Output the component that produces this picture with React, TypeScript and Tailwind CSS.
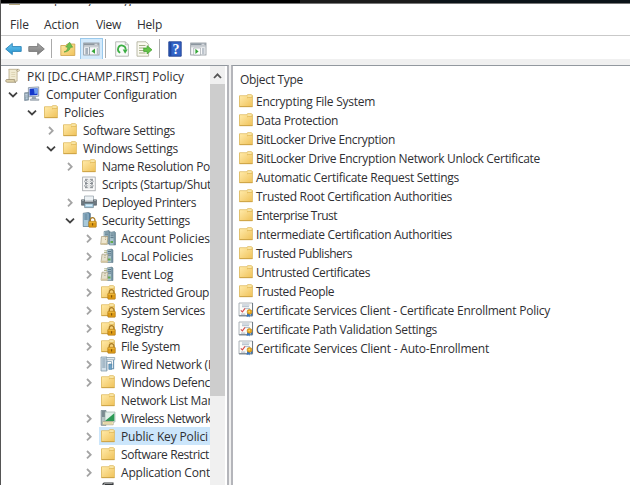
import React, { useLayoutEffect, useRef, useState } from "react";

const FONT = "font-['Open_Sans','Noto_Sans',sans-serif] text-[12px]";

/** Single-line label whose letter spacing adapts to fill the given width. */
function Label({ text, w, className = "" }: { text: string; w: number; className?: string }) {
  const ref = useRef<HTMLSpanElement>(null);
  const [spacing, setSpacing] = useState(0);
  useLayoutEffect(() => {
    if (ref.current) {
      const natural = ref.current.getBoundingClientRect().width;
      setSpacing((w - natural) / text.length);
    }
  }, [text, w]);
  return (
    <span
      ref={ref}
      style={{ letterSpacing: `${spacing}px` }}
      className={`inline-block shrink-0 translate-y-px whitespace-pre text-[#2f2f33] ${className}`}
    >
      {text}
    </span>
  );
}

type IconName =
  | "scroll" | "computer" | "folder" | "script" | "printer" | "security"
  | "serverDoc" | "server" | "lockFolder" | "wired" | "wireless" | "cert" | "stack";

function FolderShape() {
  return (
    <>
      <path d="M1.5 2.8h7.2l.8-1.1h4l.9.9v11H1.5z" fill="#f6d67b" stroke="#dcb65a" strokeWidth=".8" />
      <path d="M2 3.3h7l1 1.2h4v8.7H2z" fill="url(#fold)" />
      <path d="M9.5 2.6h4v1.3h-3.4z" fill="#fff4c4" />
      <path d="M9 5.1l1.2-.9h4" fill="none" stroke="#d5ac4b" strokeWidth=".7" />
      <path d="M1.5 13.6h13" stroke="#c99f40" strokeWidth=".9" />
    </>
  );
}

function Lock() {
  return (
    <>
      <path d="M9.3 9.8V8a2.3 2.3 0 0 1 4.6 0v1.8" fill="none" stroke="#a87b26" strokeWidth="1.3" />
      <rect x="7.8" y="9.3" width="7.5" height="5.9" rx=".6" fill="#dd9b16" stroke="#a87112" strokeWidth=".6" />
      <path d="M8.3 10.2h6.2" stroke="#f2c44e" strokeWidth=".9" />
      <path d="M11.6 11.2v2.2" stroke="#7c520c" strokeWidth="1.1" />
    </>
  );
}

function Tower({ x, y = 1 }: { x: number; y?: number }) {
  return (
    <g transform={`translate(${x} ${y})`}>
      <path d="M1 1L6 0l1 1v12.5H1z" fill="#7895a4" stroke="#516e7c" strokeWidth=".5" />
      <path d="M1.2 1.2h3.9v12H1.2z" fill="#a9c3cd" />
      <path d="M2 2.5h3M2 4.3h3M2 6.1h3" stroke="#39566a" strokeWidth=".7" />
      <path d="M2 9.5h2.5v2H2z" fill="#62a84c" />
    </g>
  );
}

function Icon({ name }: { name: IconName }) {
  return (
    <svg className="h-4 w-4 shrink-0" viewBox="0 0 16 16">
      {name === "folder" && <FolderShape />}
      {name === "lockFolder" && <><FolderShape /><Lock /></>}
      {name === "scroll" && (
        <>
          <path d="M4 1.3h9.5c1.4 0 1.4 2 0 2h-1.4v9.9H4V3C4 2 3.900 1.600 3.500 1.900z" fill="#f0ead2" stroke="#ad9e79" strokeWidth=".7" />
          <path d="M1.400 11.500h8.200c-.8 1.500.4 2.600 1.400 2.800H2.300c-1.800 0-2-2-.9-2.800z" fill="#ded1a9" stroke="#948768" strokeWidth=".7" />
          <path d="M12.900 1.500c-1.200 0-1.500 1.400-.6 1.900" fill="none" stroke="#8e8366" strokeWidth=".8" />
          <path d="M6.300 4.500h4M6.300 6.500h4M6.300 8.500h4" stroke="#d5cba9" strokeWidth=".7" />
        </>
      )}
      {name === "computer" && (
        <>
          <path d="M4.4 1.6l10.3-.7v9.3L4.4 10.8z" fill="#dfe6ee" stroke="#728394" strokeWidth=".7" />
          <path d="M5.6 2.8l7.9-.6v6.9l-7.9.5z" fill="#1537cb" />
          <path d="M9.8 2.5l3.7-.3v5.2L10.6 8z" fill="#6b9cf0" />
          <path d="M8.2 10.5h3.4l.8 2.4H7.6z" fill="#9aa7b3" />
          <path d="M6.3 13h8.5v1.4H6.3z" fill="#c5cdd4" stroke="#7d8994" strokeWidth=".5" />
          <path d="M.6 6.8l4-.4v7.7l-4 .5z" fill="#8fa3b3" stroke="#6a7c8b" strokeWidth=".6" />
          <path d="M1.3 8.4h2.2M1.3 10h2.2" stroke="#d8e2e9" strokeWidth=".8" />
          <circle cx="2.6" cy="12.2" r="1" fill="#b8cddb" />
        </>
      )}
      {name === "script" && (
        <>
          <rect x="1.7" y="1" width="12.5" height="13.8" fill="#fbfbfb" stroke="#92969a" strokeWidth=".7" />
          <path d="M4 3.3h2.8M9 3.3h3M4 7.5h2.8M9 7.5h3M4 11.7h2.8M9 11.7h3" stroke="#777d83" strokeWidth=".9" />
          <circle cx="4.9" cy="5.4" r="1.2" fill="none" stroke="#777d83" strokeWidth=".8" />
          <circle cx="10.9" cy="5.4" r="1.2" fill="none" stroke="#777d83" strokeWidth=".8" />
          <circle cx="4.9" cy="9.8" r="1.2" fill="none" stroke="#777d83" strokeWidth=".8" />
          <circle cx="10.9" cy="9.8" r="1.2" fill="none" stroke="#777d83" strokeWidth=".8" />
          <path d="M8 2.7v10" stroke="#b4b8bb" strokeWidth=".6" />
        </>
      )}
      {name === "printer" && (
        <>
          <path d="M3.5 2h9v5h-9z" fill="#edf2f5" stroke="#929fa7" strokeWidth=".7" />
          <path d="M.5 5.8h3V8h9V5.8h3v5.4H.5z" fill="#6d7880" stroke="#4c565d" strokeWidth=".6" />
          <path d="M1 6.5h2M13 6.5h2" stroke="#9ba5ab" />
          <path d="M3.6 9.6h8.8v4H3.6z" fill="#a9cfe4" stroke="#6a7f8b" strokeWidth=".7" />
          <path d="M5 11.3h6" stroke="#dff1fb" strokeWidth="1.2" />
        </>
      )}
      {name === "security" && (
        <>
          <path d="M2.2 1.2L7.6.5l1.8 1v13H2.2z" fill="#5c83a0" stroke="#4b6a7e" strokeWidth=".6" />
          <path d="M2.5 1.5h5v12.7h-5z" fill="#a8c9da" />
          <path d="M3.3 3h3.4M3.3 5h3.4M3.3 7h3.4" stroke="#365b78" strokeWidth=".9" />
          <Lock />
        </>
      )}
      {name === "serverDoc" && (
        <>
          <Tower x={3} y={.5} />
          <Tower x={8.5} y={1.5} />
          <path d="M1.5 6.5h6.3L7 14.3H.7z" fill="#eee6cf" stroke="#a79a79" strokeWidth=".7" />
          <path d="M5.2 7.8h1M5 9.5h1" stroke="#bdaf8e" />
          <path d="M.8 13h6.5v1.6H1z" fill="#d4c59d" />
        </>
      )}
      {name === "server" && (
        <>
          <Tower x={6} y={1} />
          <path d="M4.2 2.8h3M4 4.5h3" stroke="#b1b78d" strokeWidth="1" />
          <path d="M2 6.2h6l-.8 8H1z" fill="#e5e0cc" stroke="#a19b80" strokeWidth=".7" />
          <path d="M1 12.7h7v1.8H1z" fill="#d5c7a0" />
          <path d="M4.3 7.5h1.5M4.1 9.4h1.5" stroke="#b0a78c" strokeWidth=".8" />
        </>
      )}
      {name === "wired" && (
        <>
          <path d="M1 1h6v14H1z" fill="#d2e0ea" stroke="#768e9e" strokeWidth=".7" />
          <path d="M2.2 3h3.3M2.2 5h3.3M2.2 7h3.3M2.2 9h3.3M2.2 11h3.3" stroke="#648296" strokeWidth=".8" />
          <path d="M6.3 1.5h8.4v2.3H6.3z" fill="#dfe9ef" stroke="#7f95a4" strokeWidth=".7" />
          <path d="M13.6 4v8.7h-2.2" fill="none" stroke="#6c95b3" strokeWidth="1.1" />
          <path d="M6.6 14.4V5.5h5v4.8" fill="none" stroke="#8aa6ba" strokeWidth=".9" />
          <path d="M8.8 8h3v5.4h-3z" fill="#6fa3c8" stroke="#47789c" strokeWidth=".6" />
        </>
      )}
      {name === "wireless" && (
        <>
          <path d="M1.2.5h4.8v14.8H1.2z" fill="#b6c4c4" stroke="#637780" strokeWidth=".7" />
          <path d="M2 2h3M2 4h3M2 6h3" stroke="#41525c" />
          <path d="M5 2h10v10H5z" fill="#e3f0ea" stroke="#91a6a0" strokeWidth=".6" />
          <path d="M14.3 3.2v7.9H5z" fill="#2c9955" />
          <path d="M2.8 11.5h10.4v3.3H2.8z" fill="#fff4c9" stroke="#a8a184" strokeWidth=".7" />
          <path d="M4 13h8" stroke="#b4a16c" strokeWidth=".7" />
        </>
      )}
      {name === "cert" && (
        <>
          <path d="M1 1h13.6v13H1z" fill="#fbfbf8" stroke="#9ba2aa" strokeWidth=".8" />
          <path d="M14.5 1v12.7H1.2" fill="none" stroke="#717c85" strokeWidth="1" />
          <path d="M4 3h7.5M4 4.7h7M7 6.6h5" stroke="#98a9bc" strokeWidth=".8" />
          <path d="M2.8 8.3l1.6 1.6L7 6.4" fill="none" stroke="#d64b4b" strokeWidth="1.1" />
          <path d="M3 12.1h4.3" stroke="#a9b2c1" />
          <path d="M9.3 11L8.6 15l1.9-.8 1 1.2.6-4 1.6 3.2.7-3.3z" fill="#3475c0" />
          <circle cx="11.5" cy="9.9" r="2.4" fill="#e9a91e" stroke="#ba7c0d" strokeWidth=".6" />
          <circle cx="11.2" cy="9.6" r=".9" fill="#f8d667" />
        </>
      )}
      {name === "stack" && (
        <path d="M4 1h9v11H3V2zM4.5 2.5h8M1.5 4h9v11h-9z" fill="#e5e5e5" stroke="#35383b" strokeWidth="1.1" />
      )}
    </svg>
  );
}

function Chevron({ open }: { open: boolean }) {
  return (
    <svg className="h-[14px] w-[14px] shrink-0" viewBox="0 0 14 14" fill="none">
      {open ? (
        <path d="M3 5.7l4 3.7 4-3.7" stroke="#424242" strokeWidth="1.8" />
      ) : (
        <path d="M5 4l3.7 3.7L5 11.4" stroke="#a4a4a4" strokeWidth="1.8" />
      )}
    </svg>
  );
}

type State = "open" | "closed" | "none";
const indents = ["pl-[4px]", "pl-[5px]", "pl-[24px]", "pl-[43px]", "pl-[62px]", "pl-[81px]"];

const tree: [number, State, IconName, string, number][] = [
  [0, "none", "scroll", "PKI [DC.CHAMP.FIRST] Policy", 157],
  [1, "open", "computer", "Computer Configuration", 131],
  [2, "open", "folder", "Policies", 40],
  [3, "closed", "folder", "Software Settings", 92],
  [3, "open", "folder", "Windows Settings", 95],
  [4, "closed", "folder", "Name Resolution Po", 108],
  [4, "none", "script", "Scripts (Startup/Shut", 109],
  [4, "closed", "printer", "Deployed Printers", 94],
  [4, "open", "security", "Security Settings", 88],
  [5, "closed", "serverDoc", "Account Policies", 89],
  [5, "closed", "server", "Local Policies", 72],
  [5, "closed", "server", "Event Log", 52],
  [5, "closed", "lockFolder", "Restricted Group", 88],
  [5, "closed", "lockFolder", "System Services", 84],
  [5, "closed", "lockFolder", "Registry", 42],
  [5, "closed", "lockFolder", "File System", 59],
  [5, "closed", "wired", "Wired Network (I", 90],
  [5, "closed", "folder", "Windows Defenc", 89],
  [5, "none", "folder", "Network List Mar", 91],
  [5, "closed", "wireless", "Wireless Network", 90],
  [5, "closed", "folder", "Public Key Polici", 87],
  [5, "closed", "folder", "Software Restrict", 88],
  [5, "closed", "folder", "Application Cont", 89],
  [5, "none", "stack", "", 0],
];

const objects: [IconName, string, number][] = [
  ["folder", "Encrypting File System", 119],
  ["folder", "Data Protection", 82],
  ["folder", "BitLocker Drive Encryption", 139],
  ["folder", "BitLocker Drive Encryption Network Unlock Certificate", 284],
  ["folder", "Automatic Certificate Request Settings", 203],
  ["folder", "Trusted Root Certification Authorities", 196],
  ["folder", "Enterprise Trust", 81],
  ["folder", "Intermediate Certification Authorities", 196],
  ["folder", "Trusted Publishers", 96],
  ["folder", "Untrusted Certificates", 114],
  ["folder", "Trusted People", 78],
  ["cert", "Certificate Services Client - Certificate Enrollment Policy", 294],
  ["cert", "Certificate Path Validation Settings", 181],
  ["cert", "Certificate Services Client - Auto-Enrollment", 233],
];

function TreeRow({ row }: { row: (typeof tree)[number] }) {
  const [level, state, icon, text, w] = row;
  const selected = text.startsWith("Public Key");
  return (
    <div className={`flex h-[18px] shrink-0 items-center ${indents[level]}`}>
      {level > 0 && (
        <span className="mr-[4px] h-[14px] w-[14px] shrink-0">
          {state !== "none" && <Chevron open={state === "open"} />}
        </span>
      )}
      <div className={`flex h-[18px] min-w-0 items-center ${selected ? "-ml-[1px] flex-1 bg-[#cce6fb] pl-[1px]" : ""}`}>
        <Icon name={icon} />
        {text && <Label text={text} w={w} className={level < 2 ? "ml-[6px]" : "ml-[5px]"} />}
      </div>
    </div>
  );
}

const Sep = () => <span className="h-[19px] w-px shrink-0 bg-[#aaaaaa]" />;

function Arrow({ left }: { left?: boolean }) {
  return (
    <svg className="h-4 w-[17px] shrink-0" viewBox="0 0 17 16">
      {left ? (
        <path d="M.7 8l6.6-5.6v3.2h8.9v4.8H7.3v3.2z" fill="url(#blue)" stroke="#2a83b8" strokeWidth=".9" />
      ) : (
        <path d="M16.3 8L9.7 2.4v3.2H.8v4.8h8.9v3.2z" fill="url(#gray)" stroke="#777777" strokeWidth=".9" />
      )}
    </svg>
  );
}

function PaneIcon({ right }: { right?: boolean }) {
  return (
    <svg className="h-4 w-[17px] shrink-0" viewBox="0 0 17 16">
      <rect x=".7" y="2" width="15.3" height="12" fill="#f7f8f9" stroke="#8b9299" strokeWidth=".8" />
      <path d="M1 2.3h14.8v2.2H1z" fill="#8c969f" />
      <path d="M11.5 3.3h3" stroke="#eef1f4" strokeWidth=".9" />
      <path d="M1 5.8h15" stroke="#b6bdc4" />
      {right ? (
        <>
          <path d="M3.7 7h6.8v7H3.7z" fill="#fff" stroke="#a0a6ad" strokeWidth=".7" />
          <path d="M5.4 7.8l3.2 2.6-3.2 2.5z" fill="#36a638" />
          <path d="M12 7h2.5v6.5H12z" fill="#bdc4cc" />
        </>
      ) : (
        <>
          <path d="M2.3 7h2.8v6.5H2.3z" fill="#a6b1bc" />
          <path d="M6.5 6v8" stroke="#89949e" strokeWidth=".8" />
          <path d="M12 7.6v5.2L8.5 10.2z" fill="#36a638" />
          <path d="M14.3 7v6.5" stroke="#a6b1bc" />
        </>
      )}
    </svg>
  );
}

function Toolbar() {
  return (
    <div className="flex h-[24px] shrink-0 items-center border-t border-[#c9c9c9] bg-white pt-[2px] pl-[4px]">
      <Arrow left />
      <span className="ml-[6px] flex"><Arrow /></span>
      <span className="ml-[6px] flex"><Sep /></span>
      <svg className="ml-[8px] h-4 w-4 shrink-0" viewBox="0 0 16 16">
        <path d="M.8 4.5h5L7 3h7.8v11.5H.8z" fill="url(#fold)" stroke="#cda24a" strokeWidth=".8" />
        <path d="M4 11c2.4-.8 3.600-2.400 3.900-4.800L5.700 6 9.600 1.200l3 5-2.200.1C9.900 9 7.800 11 4 11z" fill="#6cc050" stroke="#469a34" strokeWidth=".6" />
      </svg>
      <span className="ml-[4px] flex h-[22px] w-[23px] items-center justify-center border border-[#99c9ec] bg-[#d4eafb]">
        <PaneIcon />
      </span>
      <span className="ml-[2px] flex"><Sep /></span>
      <svg className="ml-[9px] h-4 w-[14px] shrink-0" viewBox="0 0 14 16">
        <path d="M.7.8h9.7l3 3v11.4H.7z" fill="#fafbfa" stroke="#a4aaa4" strokeWidth=".8" />
        <path d="M10.3.8v3h3" fill="none" stroke="#a4aaa4" strokeWidth=".7" />
        <path d="M5.2 11.7a3.8 3.8 0 1 1 5.4-3.1" fill="none" stroke="#3cae43" strokeWidth="1.8" />
        <path d="M7.7 8.5h5l-2.6 4.2z" fill="#3cae43" />
      </svg>
      <svg className="ml-[7px] h-4 w-[17px] shrink-0" viewBox="0 0 17 16">
        <path d="M1 .8h9l2.6 2.7v11.7H1z" fill="#fbfaf1" stroke="#a9aa96" strokeWidth=".8" />
        <path d="M3 4.5h6.5M3 7h5M3 9.5h5M3 12h6.5" stroke="#9ca47d" strokeWidth=".9" />
        <path d="M7.7 7h3.4V4.7L16 8.8l-4.9 4.1v-2.4H7.7z" fill="#65c348" stroke="#3b9c2b" strokeWidth=".7" />
      </svg>
      <span className="ml-[6px] flex"><Sep /></span>
      <svg className="ml-[8px] h-4 w-[14px] shrink-0" viewBox="0 0 14 16">
        <path d="M.8.8h12.4v14.4H.8z" fill="#3264c7" stroke="#203f91" strokeWidth=".9" />
        <path d="M1.4 1.2h2v13.6h-2z" fill="#1e469f" />
        <text x="8" y="12.5" textAnchor="middle" fill="#fff" className="font-['Liberation_Serif',serif] text-[14px] font-bold">?</text>
      </svg>
      <span className="ml-[8px] flex"><PaneIcon right /></span>
    </div>
  );
}

export default function App() {
  return (
    <div className={`flex h-[485px] w-[630px] flex-col overflow-hidden border-l border-[#555555] bg-[#f0f0f0] ${FONT} leading-[18px]`}>
      <svg className="absolute h-0 w-0">
        <defs>
          <linearGradient id="fold" x1="0" y1="0" x2="1" y2="1"><stop stopColor="#ffe9a7" /><stop offset="1" stopColor="#f0c35b" /></linearGradient>
          <linearGradient id="blue" x1="0" y1="0" x2="0" y2="1"><stop stopColor="#6cc6f0" /><stop offset="1" stopColor="#2493cf" /></linearGradient>
          <linearGradient id="gray" x1="0" y1="0" x2="0" y2="1"><stop stopColor="#aaa" /><stop offset="1" stopColor="#7b7b7b" /></linearGradient>
        </defs>
      </svg>
      <div className="flex h-[3px] shrink-0 bg-black">
        <span className="ml-[299px] w-[130px] bg-[#1b1b1b]" />
        <span className="flex-1 bg-[#0b1318]" />
      </div>
      <div className="flex h-[3px] shrink-0 items-end overflow-hidden border-t border-[#777777] bg-white">
        <span className="mb-[1px] ml-[8px] h-[1px] w-[11px] shrink-0 bg-[#b5a77f]" />
        <Label text="Group Policy Management Editor" w={169} className="-mb-[2px] ml-[8px]" />
      </div>
      <div className="flex h-[29px] shrink-0 items-center bg-white pt-[7px] pl-[9px]">
        <Label text="File" w={19} />
        <Label text="Action" w={35} className="ml-[15px]" />
        <Label text="View" w={25} className="ml-[17px]" />
        <Label text="Help" w={25} className="ml-[16px]" />
      </div>
      <Toolbar />
      <div className="h-[6px] shrink-0 bg-[#f0f0f0]" />
      <div className="flex min-h-0 flex-1">
        <div className="flex w-[228px] shrink-0 overflow-hidden border-t border-r-2 border-t-[#92989f] border-r-[#b4b5ba] bg-white">
          <div className="flex w-[209px] shrink-0 flex-col overflow-hidden pt-[1px]">
            {tree.map((row, i) => <TreeRow key={i} row={row} />)}
          </div>
          <div className="flex w-[15px] shrink-0 flex-col bg-[#f0f0f0]">
            <svg className="h-[18px] w-[15px] shrink-0" viewBox="0 0 15 18">
              <path d="M4 12l3.5-3.7L11 12" fill="none" stroke="#555" strokeWidth="1.8" />
            </svg>
            <div className="h-[312px] bg-[#cdcdcd]" />
          </div>
        </div>
        <div className="w-[2px] shrink-0 bg-[#f0f0f0]" />
        <div className="flex min-w-0 flex-1 flex-col border-t border-l-2 border-t-[#92989f] border-l-[#b4b5ba] bg-white pl-[5px]">
          <div className="flex h-[25px] shrink-0 items-center pt-[1px] pl-[2px]">
            <Label text="Object Type" w={63} />
          </div>
          {objects.map(([icon, text, w]) => (
            <div key={text} className="flex h-[19px] shrink-0 items-center">
              <Icon name={icon} />
              <Label text={text} w={w} className="ml-[2px]" />
            </div>
          ))}
        </div>
      </div>
    </div>
  );
}
